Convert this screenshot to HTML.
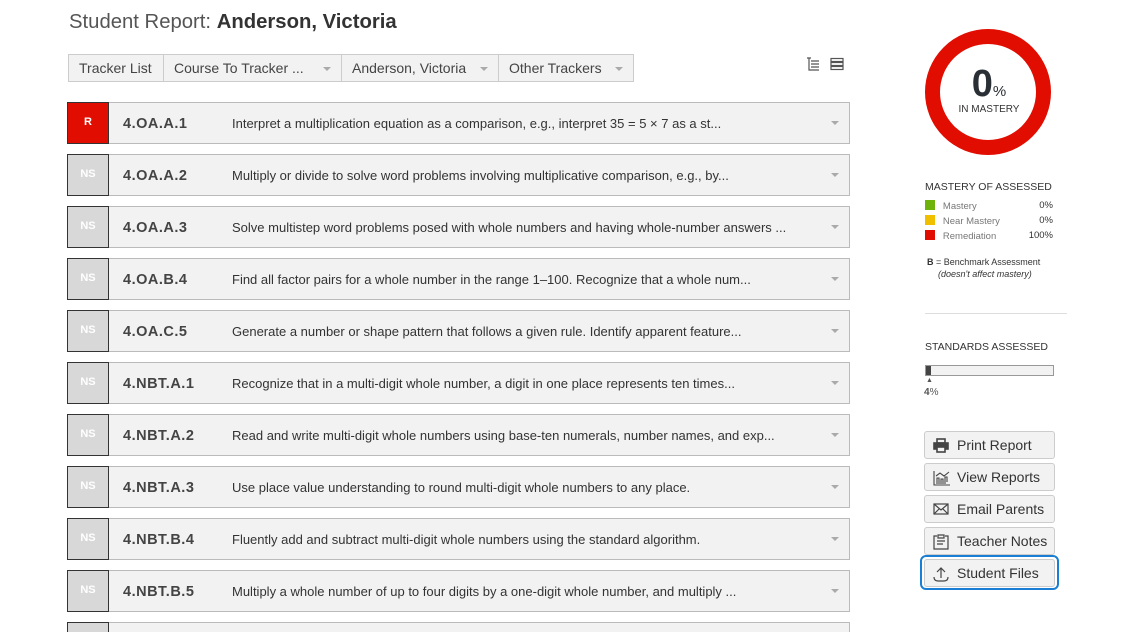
<!DOCTYPE html>
<html><head><meta charset="utf-8"><style>
*{box-sizing:border-box;margin:0;padding:0}
html,body{width:1139px;height:632px;overflow:hidden}
body{background:#fff;font-family:"Liberation Sans",Arial,sans-serif;color:#333;position:relative}
.title{position:absolute;left:69px;top:11px;font-size:20.3px;color:#555}
.title b{color:#333}
.tabs{position:absolute;left:68px;top:54px;height:28px;display:flex;border:1px solid #ccc;background:#f2f2f2;font-size:14px;color:#444}
.tabs div{padding:0 10px;line-height:26px;border-right:1px solid #ccc;position:relative;white-space:nowrap}
.tabs div:last-child{border-right:0}
.car{position:absolute;right:10px;top:12px;width:0;height:0;border-left:4px solid transparent;border-right:4px solid transparent;border-top:4px solid #aaa}
.row{position:absolute;left:67px;width:783px;height:42px;border:1px solid #bbb;background:#f2f2f2;font-size:13px}
.badge{position:absolute;left:-1px;top:-1px;width:42px;height:42px;border:1px solid #333;background:#d8d8d8;color:#fff;font-size:11px;font-weight:bold;text-align:center;padding-top:13px}
.badge.r{background:#e00d00}
.code{position:absolute;left:55px;top:13px;font-weight:bold;color:#444;font-size:14.5px;letter-spacing:0.5px}
.desc{position:absolute;left:164px;top:13px;color:#333}
.rc{position:absolute;right:10px;top:18px;border-left:4px solid transparent;border-right:4px solid transparent;border-top:4px solid #aaa}
.side{position:absolute;font-size:10px;color:#333}
.btn{position:absolute;left:924px;width:131px;height:28px;border:1px solid #ccc;border-radius:3px;background:#f2f2f2;font-size:14px;color:#333;line-height:26px;padding-left:32px}
.btn svg{position:absolute;left:8px;top:6px}
</style></head><body>
<div class="title">Student Report: <b>Anderson, Victoria</b></div>
<div class="tabs"><div style="width:95px">Tracker List</div><div style="width:178px">Course To Tracker ...<span class="car"></span></div><div style="width:157px">Anderson, Victoria<span class="car"></span></div><div style="width:134px">Other Trackers<span class="car"></span></div></div>
<svg style="position:absolute;left:806px;top:57px" width="40" height="14"><g fill="none" stroke="#555" stroke-width="1.2"><path d="M1 1h4M3 1v12h10M5 4h8M5 7h8M5 10h8"/><rect x="25" y="1.5" width="12" height="3"/><rect x="25" y="5.5" width="12" height="3"/><rect x="25" y="9.5" width="12" height="3"/></g></svg>

<div class="row" style="top:102px"><div class="badge r">R</div><div class="code">4.OA.A.1</div><div class="desc">Interpret a multiplication equation as a comparison, e.g., interpret 35 = 5 × 7 as a st...</div><div class="rc"></div></div>
<div class="row" style="top:154px"><div class="badge">NS</div><div class="code">4.OA.A.2</div><div class="desc">Multiply or divide to solve word problems involving multiplicative comparison, e.g., by...</div><div class="rc"></div></div>
<div class="row" style="top:206px"><div class="badge">NS</div><div class="code">4.OA.A.3</div><div class="desc">Solve multistep word problems posed with whole numbers and having whole-number answers ...</div><div class="rc"></div></div>
<div class="row" style="top:258px"><div class="badge">NS</div><div class="code">4.OA.B.4</div><div class="desc">Find all factor pairs for a whole number in the range 1–100. Recognize that a whole num...</div><div class="rc"></div></div>
<div class="row" style="top:310px"><div class="badge">NS</div><div class="code">4.OA.C.5</div><div class="desc">Generate a number or shape pattern that follows a given rule. Identify apparent feature...</div><div class="rc"></div></div>
<div class="row" style="top:362px"><div class="badge">NS</div><div class="code">4.NBT.A.1</div><div class="desc">Recognize that in a multi-digit whole number, a digit in one place represents ten times...</div><div class="rc"></div></div>
<div class="row" style="top:414px"><div class="badge">NS</div><div class="code">4.NBT.A.2</div><div class="desc">Read and write multi-digit whole numbers using base-ten numerals, number names, and exp...</div><div class="rc"></div></div>
<div class="row" style="top:466px"><div class="badge">NS</div><div class="code">4.NBT.A.3</div><div class="desc">Use place value understanding to round multi-digit whole numbers to any place.</div><div class="rc"></div></div>
<div class="row" style="top:518px"><div class="badge">NS</div><div class="code">4.NBT.B.4</div><div class="desc">Fluently add and subtract multi-digit whole numbers using the standard algorithm.</div><div class="rc"></div></div>
<div class="row" style="top:570px"><div class="badge">NS</div><div class="code">4.NBT.B.5</div><div class="desc">Multiply a whole number of up to four digits by a one-digit whole number, and multiply ...</div><div class="rc"></div></div>
<div class="row" style="top:622px;height:10px;border-bottom:0"><div class="badge" style="height:11px;border-bottom:0"></div></div>

<svg style="position:absolute;left:924px;top:28px" width="130" height="130"><circle cx="64" cy="64" r="55.5" fill="none" stroke="#e00d00" stroke-width="15"/></svg>
<div style="position:absolute;left:924px;top:64px;width:130px;text-align:center;font-size:38px;font-weight:bold;color:#2a2f36;line-height:40px">0<span style="font-size:15px;font-weight:normal">%</span></div>
<div style="position:absolute;left:924px;top:104px;width:130px;text-align:center;font-size:10px;color:#333">IN MASTERY</div>

<div class="side" style="left:925px;top:181px;font-size:10.5px">MASTERY OF ASSESSED</div>
<div class="side" style="left:925px;top:200px;width:128px;color:#777;font-size:9.5px"><span style="display:inline-block;width:10px;height:10px;background:#6fb30a;vertical-align:-1px"></span>&nbsp;&nbsp;&nbsp;Mastery<span style="float:right;color:#333">0%</span></div>
<div class="side" style="left:925px;top:215px;width:128px;color:#777;font-size:9.5px"><span style="display:inline-block;width:10px;height:10px;background:#f0c000;vertical-align:-1px"></span>&nbsp;&nbsp;&nbsp;Near Mastery<span style="float:right;color:#333">0%</span></div>
<div class="side" style="left:925px;top:230px;width:128px;color:#777;font-size:9.5px"><span style="display:inline-block;width:10px;height:10px;background:#e00d00;vertical-align:-1px"></span>&nbsp;&nbsp;&nbsp;Remediation<span style="float:right;color:#333">100%</span></div>
<div class="side" style="left:927px;top:257px;font-size:9px"><b>B</b> = Benchmark Assessment</div>
<div class="side" style="left:938px;top:269px;font-size:9px;font-style:italic">(doesn't affect mastery)</div>
<div style="position:absolute;left:925px;top:313px;width:142px;border-top:1px solid #ddd"></div>
<div class="side" style="left:925px;top:341px;font-size:10.5px">STANDARDS ASSESSED</div>
<div style="position:absolute;left:925px;top:365px;width:129px;height:11px;border:1px solid #999;background:#f2f2f2"><div style="width:5px;height:9px;background:#444"></div></div>
<div class="side" style="left:926px;top:377px;font-size:7px;color:#555">▲</div>
<div class="side" style="left:924px;top:387px;font-size:10px;color:#555"><b>4</b>%</div>

<div class="btn" style="top:431px"><svg width="16" height="16" fill="none" stroke="#444" stroke-width="1.6"><rect x="4" y="1" width="8" height="4"/><rect x="1" y="5" width="14" height="6" fill="#444"/><rect x="4" y="9" width="8" height="5" fill="#f2f2f2"/></svg>Print Report</div>
<div class="btn" style="top:463px"><svg width="18" height="16" fill="none" stroke="#444" stroke-width="1.1"><path d="M1 1v14h16M4 14V8h2v6M8 14V9h2v5M12 14V7h2v5M3 6l4-3 4 3 5-4"/></svg>View Reports</div>
<div class="btn" style="top:495px"><svg width="16" height="14" fill="none" stroke="#444" stroke-width="1.2"><rect x="1" y="2" width="14" height="10"/><path d="M1 2l7 6 7-6M1 12l5-5M15 12l-5-5"/></svg>Email Parents</div>
<div class="btn" style="top:527px"><svg width="16" height="16" fill="none" stroke="#444" stroke-width="1.2"><path d="M4 2H1v13h14V2h-3M5 1h6v3H5zM4 7h8M4 10h6"/></svg>Teacher Notes</div>
<div style="position:absolute;left:920px;top:555px;width:139px;height:35px;border:2px solid #1a7fd4;border-radius:6px"></div>
<div class="btn" style="top:559px"><svg width="16" height="16" fill="none" stroke="#444" stroke-width="1.2"><path d="M8 12V2M4 6l4-4 4 4M1 11q0 4 4 4h6q4 0 4-4"/></svg>Student Files</div>
</body></html>
